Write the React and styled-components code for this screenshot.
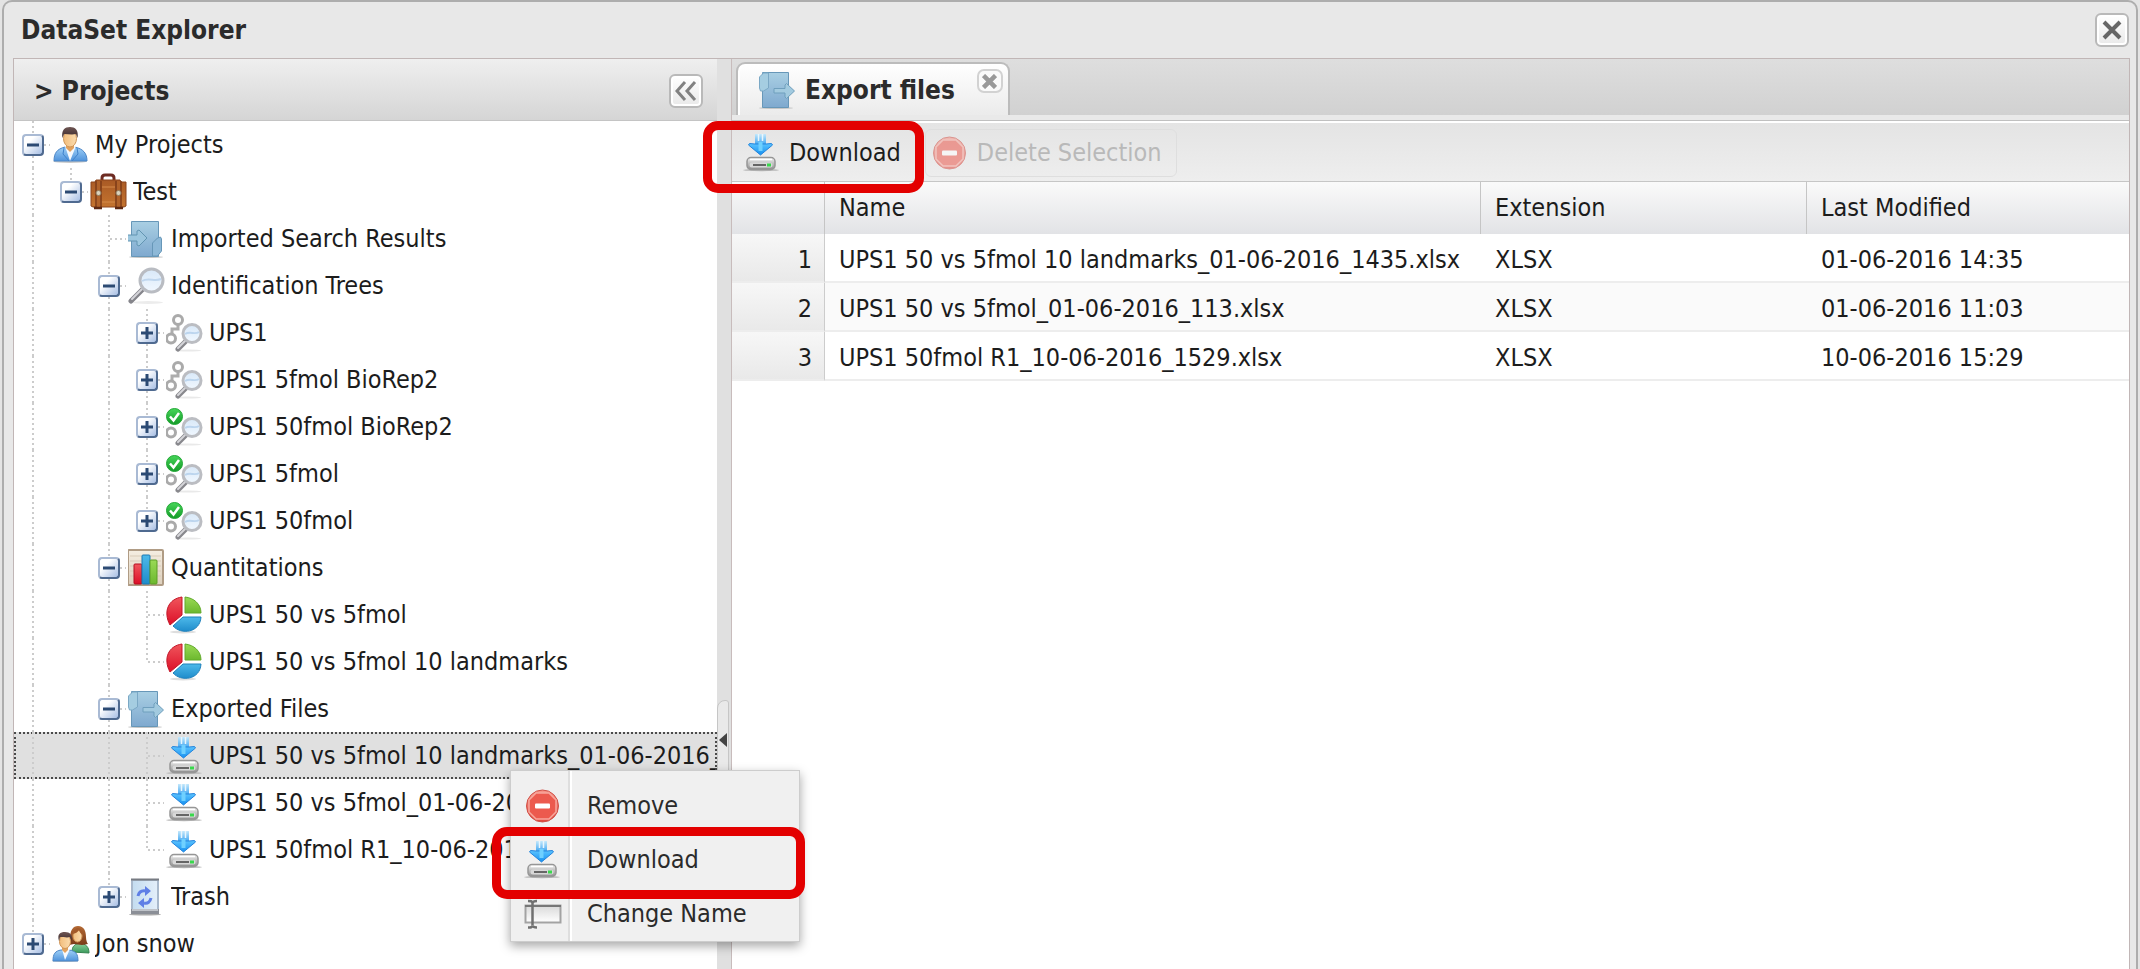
import React from "react";
import styled, { createGlobalStyle, css } from "styled-components";

const GlobalStyle = createGlobalStyle`
  * {
    box-sizing: border-box;
  }

  body {
    margin: 0;
    background: #e4e4e4;
    color: #1c1c1c;
    font-family: "DejaVu Sans Condensed", Roboto, "Liberation Sans", sans-serif;
    font-size: 25px;
    line-height: 30px;
  }

  button {
    margin: 0;
    padding: 0;
    border: 0;
    background: none;
    color: inherit;
    font: inherit;
    text-align: left;
    cursor: pointer;
  }

  svg {
    display: block;
    flex: none;
  }
`;

const Window = styled.div`
  display: flex;
  flex-flow: column;
  height: 100vh;
  margin: 0 2px;
  padding: 0 6px 0 9px;
  overflow: hidden;
  border: 2px solid #adadad;
  border-bottom: 0;
  border-radius: 10px 10px 0 0;
  background: #e8e8e8;
`;

const TitleBar = styled.header`
  display: flex;
  flex: none;
  align-items: center;
  justify-content: space-between;
  height: 56px;
  padding: 0 1px 0 8px;
`;

const Title = styled.h1`
  margin: 0;
  color: #2b2b2b;
  font-size: 26px;
  font-weight: bold;
`;

const ToolButton = styled.button`
  display: flex;
  align-items: center;
  justify-content: center;
  width: 34px;
  height: 34px;
  border: 2px solid #b9b9b9;
  border-radius: 6px;
  background: linear-gradient(#ffffff, #e9e9e9);
  box-shadow: inset 0 0 0 2px #ffffff;
`;

const Body = styled.div`
  display: flex;
  flex: 1;
  min-height: 0;
  border: solid #c1b6b6;
  border-width: 1px 1px 0;
  background: #ffffff;
`;

const Sidebar = styled.aside`
  flex: none;
  width: 703px;
`;

const PanelHeader = styled.div`
  display: flex;
  align-items: center;
  justify-content: space-between;
  height: 62px;
  padding: 2px 14px 0 20px;
  border-bottom: 1px solid #c4c4c4;
  background: linear-gradient(#efefef, #d5d5d5);
`;

const PanelTitle = styled(Title).attrs({ as: "h2" })``;

const Tree = styled.ul`
  margin: 0;
  padding: 0;
  list-style: none;
`;

const TreeItem = styled.li`
  position: relative;
`;

const TreeRow = styled.div`
  display: flex;
  align-items: center;
  height: 47px;

  ${({ $selected }) =>
    $selected &&
    css`
      background: #e0e0e0;
      outline: 2px dotted #4a4a4a;
      outline-offset: -2px;
    `}
`;

const verticalDots =
  "repeating-linear-gradient(#cccccc 0 2px, transparent 2px 5px)";
const horizontalDots =
  "repeating-linear-gradient(90deg, #cccccc 0 2px, transparent 2px 5px)";

const Indent = styled.span`
  position: relative;
  display: flex;
  flex: none;
  align-items: center;
  justify-content: center;
  width: 38px;
  height: 47px;

  &::before {
    content: "";
    position: absolute;
    top: 0;
    left: 18px;
    width: 2px;
    height: ${({ $line }) => ({ full: "100%", end: "50%" }[$line] || 0)};
    background: ${verticalDots};
  }

  &::after {
    content: "";
    position: absolute;
    top: 23px;
    left: 20px;
    width: ${({ $elbow }) => ($elbow ? "16px" : 0)};
    height: 2px;
    background: ${horizontalDots};
  }
`;

const Expander = styled.button`
  position: relative;
  z-index: 1;
  display: flex;
  align-items: center;
  justify-content: center;
  width: 22px;
  height: 22px;
  border: 2px solid #4f6a90;
  border-top-color: #a9bad4;
  border-left-color: #a9bad4;
  border-radius: 4px;
  background: linear-gradient(135deg, #ffffff 30%, #a8bfe4);
`;

const TreeLabel = styled.span`
  flex: 1;
  margin-left: 5px;
  overflow: hidden;
  white-space: nowrap;
`;

const Splitter = styled.div`
  display: flex;
  flex: none;
  flex-flow: column;
  width: 14px;
  padding-top: 641px;
  background: #e0e0e0;
`;

const SplitterHandle = styled.button`
  display: flex;
  align-items: center;
  justify-content: center;
  width: 12px;
  height: 80px;
  border: 1px solid #c6c6c6;
  border-radius: 8px 3px 3px 8px;
  background: #e9e9e9;
`;

const Main = styled.main`
  flex: 1;
  min-width: 0;
  border-left: 1px solid #c8bcbc;
`;

const TabBar = styled.div`
  display: flex;
  align-items: flex-end;
  height: 56px;
  padding-left: 4px;
  background: linear-gradient(#dedede, #d1d1d1);
`;

const TabStrip = styled.div`
  height: 8px;
  border-bottom: 2px solid #ffffff;
  background: linear-gradient(#e9e9e9 5px, #c0c0c0 5px);
`;

const Tab = styled.div`
  display: flex;
  align-items: center;
  height: 53px;
  padding: 0 5px 0 21px;
  border: 2px solid #bcbcbc;
  border-bottom: 0;
  border-radius: 9px 9px 0 0;
  background: linear-gradient(#ffffff, #ebebeb);
  box-shadow: inset 2px 1px 0 #ffffff;
`;

const TabLabel = styled.button`
  display: flex;
  gap: 8px;
  align-items: center;
  color: #2b2b2b;
  font-size: 26px;
  font-weight: bold;
`;

const TabClose = styled.button`
  display: flex;
  align-self: flex-start;
  align-items: center;
  justify-content: center;
  width: 26px;
  height: 24px;
  margin: 5px 0 0 22px;
  border: 2px solid #d2d2d2;
  border-radius: 7px;
  background: #fafafa;
`;

const Toolbar = styled.div`
  display: flex;
  gap: 9px;
  align-items: center;
  height: 59px;
  padding: 2px 0 0 5px;
  border-bottom: 1px solid #c6c6c6;
  background: linear-gradient(#e4e4e4, #eeeeee);
`;

const ToolbarButton = styled.button`
  position: relative;
  display: flex;
  gap: 8px;
  align-items: center;
  height: 48px;
  padding: 0 14px 0 5px;
  border: 1px solid transparent;
  border-radius: 6px;

  &:disabled {
    border-color: #dedede;
    color: #b9b9b9;
    cursor: default;

    svg {
      opacity: 0.55;
    }
  }
`;

const Highlight = styled.span`
  position: absolute;
  z-index: 3;
  border: 9px solid #e30000;
  border-radius: 15px;
  pointer-events: none;
`;

const ToolbarHighlight = styled(Highlight)`
  top: -9px;
  right: -9px;
  left: -35px;
  height: 72px;
`;

const Grid = styled.table`
  width: 100%;
  border-collapse: separate;
  border-spacing: 0;
  table-layout: fixed;
`;

const Column = styled.col`
  width: ${({ $width }) => $width};
`;

const HeadCell = styled.th`
  height: 52px;
  padding: 0 14px;
  border-right: 1px solid #c5c5c5;
  background: linear-gradient(#fafafa, #e2e3e6);
  font-weight: normal;
  text-align: left;

  &:last-child {
    border-right: 0;
  }
`;

const Cell = styled.td`
  height: 49px;
  padding: 4px 14px 0;
  border-bottom: 2px solid #ededed;
  overflow: hidden;
  white-space: nowrap;

  tr:nth-child(even) > & {
    background: #fafafa;
  }
`;

const NumberCell = styled.th`
  height: 49px;
  padding: 4px 12px 0;
  border-right: 1px solid #cccccc;
  border-bottom: 2px solid #ededed;
  background: linear-gradient(#f7f7f7, #e9e9e9);
  font-weight: normal;
  text-align: right;
`;

const ContextMenu = styled.div`
  position: absolute;
  z-index: 2;
  top: 38px;
  left: 496px;
  width: 290px;
  padding-top: 8px;
  border: 1px solid #cdcdcd;
  background: linear-gradient(
    90deg,
    #f0f0f0 57px,
    #dedede 57px 59px,
    #ffffff 59px 61px,
    #f0f0f0 61px
  );
  box-shadow: 0 4px 10px rgba(0, 0, 0, 0.35);
`;

const MenuItem = styled.button`
  position: relative;
  display: flex;
  gap: 25px;
  align-items: center;
  width: 100%;
  height: 54px;
  padding-left: 13px;
  color: #2b2b2b;
`;

const MenuHighlight = styled(Highlight)`
  top: -6px;
  right: -6px;
  left: -19px;
  height: 72px;
`;

const Defs = styled.svg`
  position: absolute;
  width: 0;
  height: 0;
`;

const Gradient = ({ id, from, to, flat }) => (
  <linearGradient id={id} x1="0" y1="0" x2={flat ? 1 : 0} y2={flat ? 0 : 1}>
    <stop offset="0" stopColor={from} />
    <stop offset="1" stopColor={to} />
  </linearGradient>
);

const IconDefs = () => (
  <Defs aria-hidden="true">
    <defs>
      <Gradient id="shirt" from="#9fd0f7" to="#4f93dc" />
      <Gradient id="shirt-green" from="#8ed09a" to="#3b9a5c" />
      <Gradient id="skin" from="#f2bd7c" to="#fbdcae" flat />
      <Gradient id="hair" from="#6e5552" to="#3c2a2c" />
      <Gradient id="ginger" from="#b46a34" to="#7a3a18" />
      <Gradient id="leather" from="#a95a25" to="#c4742f" />
      <Gradient id="folder" from="#a9cfe3" to="#7fa9cf" />
      <Gradient id="lens" from="#d8e8f8" to="#f1f8ff" />
      <Gradient id="arrow" from="#5cc4ff" to="#1590f0" />
      <Gradient id="shaft" from="#c4e8fb" to="#2f9df0" />
      <Gradient id="drive" from="#f2f2f2" to="#8d8d8d" />
      <Gradient id="stop" from="#f8978a" to="#e2453a" />
      <Gradient id="red" from="#f0565c" to="#dc0f28" />
      <Gradient id="blue" from="#4db9ea" to="#1f8ccb" />
      <Gradient id="green" from="#9ada55" to="#6cb82e" />
      <Gradient id="check" from="#47d65a" to="#149a27" />
      <Gradient id="paper" from="#f5eee2" to="#ddd0bd" />
      <Gradient id="bin" from="#c3dcf0" to="#e4effa" flat />
      <Gradient id="field" from="#d9d9d9" to="#ffffff" />
    </defs>
  </Defs>
);

const Icon = ({ children }) => (
  <svg width="38" height="38" viewBox="0 0 38 38" fill="none" aria-hidden="true">
    {children}
  </svg>
);

const UserIcon = () => (
  <Icon>
    <ellipse cx="18" cy="35.5" rx="17" ry="1.5" fill="#c9c9c9" />
    <path d="M2 35c0-8 3-12 11-14h10c8 2 12 6 12 14z" fill="url(#shirt)" stroke="#4c86c6" />
    <path d="M13 20l5 15 6-15z" fill="#f6f9fd" />
    <path d="M12 22l-1 6 6 7M25 22l1 6-6 7" stroke="#3f82cb" />
    <path d="M14 17h8v5l-4 4-4-4z" fill="#e2a25e" />
    <ellipse cx="18" cy="12.5" rx="6.5" ry="8.5" fill="url(#skin)" stroke="#cf9557" />
    <path d="M10.5 12C9 4 13 1 18 1s9 3 7.500 11L24 8c-4 1-8 0-12 0z" fill="url(#hair)" />
  </Icon>
);

const UsersIcon = () => (
  <Icon>
    <path d="M20 27c0-6 3-8 8-9 6 1 9 4 9 10z" fill="url(#shirt-green)" stroke="#358450" />
    <path d="M18 14C18 5 21 1 26 1c6 0 8 5 8 11 0 3 1 6 2 7l-6 1-8-1-5 1z" fill="url(#ginger)" />
    <ellipse cx="25.5" cy="11" rx="4.5" ry="6" fill="url(#skin)" stroke="#cf9557" />
    <path d="M21 9c3-1 5-2 6-4 1 3 2 4 4 5-1-6-3-7-6-7-3 1-4 3-4 6z" fill="#a35a2a" />
    <ellipse cx="13" cy="36" rx="13" ry="1" fill="#c9c9c9" />
    <path d="M1 36c0-7 2-10 8-11h8c7 1 9 4 9 11z" fill="url(#shirt)" stroke="#4c86c6" />
    <path d="M10 24l3 11 5-11z" fill="#f6f9fd" />
    <path d="M10 21h6v4l-3 3-3-3z" fill="#e2a25e" />
    <ellipse cx="13" cy="16.5" rx="5.5" ry="7" fill="url(#skin)" stroke="#cf9557" />
    <path d="M7 16C5 9 8 7 13 7s8 3 6.500 9L18 12c-3 1-6 0-10 0z" fill="url(#hair)" />
  </Icon>
);

const SuitcaseIcon = () => (
  <Icon>
    <path d="M12 9V5c0-2 1-3 3-3h6c2 0 3 1 3 3v4" stroke="#6d2b22" strokeWidth="3" />
    <path d="M1 9h4l1-2h24l1 2h5v24l-2 1H3l-2-1z" fill="url(#leather)" stroke="#8b451c" />
    <path d="M6 8v27M11 8v27M26 8v27M31 8v27" stroke="#7d3b18" strokeWidth="1.5" />
    <path d="M7 8h3v27H7zM27 8h3v27h-3z" fill="#b0622a" />
    <path d="M12 14h13M12 29h13" stroke="#d58b4a" />
    <path d="M4 35h8M25 35h8" stroke="#5e2812" strokeWidth="2.5" />
    <circle cx="8.5" cy="20" r="2.5" fill="#d9d2bd" stroke="#8e7a5c" />
    <circle cx="28.5" cy="20" r="2.5" fill="#d9d2bd" stroke="#8e7a5c" />
  </Icon>
);

const ImportIcon = () => (
  <Icon>
    <ellipse cx="18" cy="37" rx="17" ry="1" fill="#c5c5c5" />
    <path d="M3.5 1.5h27v35h-27z" fill="url(#folder)" stroke="#6797b8" />
    <path d="M24.5 36V23l5-5 3-1 1 2v12l-4 5z" fill="#8db8d7" stroke="#6797b8" />
    <path d="M-1 15h10v-4l2-1 8 8-8 8-2-1v-4H-1z" fill="#9cc6de" stroke="#6395b2" />
  </Icon>
);

const ExportIcon = () => (
  <Icon>
    <ellipse cx="17" cy="37" rx="17" ry="1" fill="#c5c5c5" />
    <path d="M3.5 1.5h26v35h-26z" fill="url(#folder)" stroke="#6797b8" />
    <path d="M.5 17V6l4-4h5v15l-5 3h-3z" fill="#a5cde1" stroke="#7ba8c5" />
    <path d="M15 17.500h11V14l1.500-1.500 8 7.500-8 7.500L26 26v-4H15z" fill="#a2cadf" stroke="#6f9fbd" />
  </Icon>
);

const SearchIcon = () => (
  <Icon>
    <ellipse cx="20" cy="35.5" rx="15" ry="1.5" fill="#ececec" />
    <path d="M14 23L3 34" stroke="#85858b" strokeWidth="5" strokeLinecap="round" />
    <path d="M14 22L4 32" stroke="#d5d5da" strokeWidth="2" strokeLinecap="round" />
    <circle cx="23.5" cy="13.5" r="11.5" fill="url(#lens)" stroke="#b9bcc2" strokeWidth="3" />
    <path d="M14 14c6-4 13 1 19-2" stroke="#bfd6ee" strokeWidth="2" />
  </Icon>
);

const lens = (
  <>
    <ellipse cx="22" cy="36.5" rx="13" ry="1" fill="#e9e9e9" />
    <path d="M20 27l-8 8" stroke="#88888d" strokeWidth="5" strokeLinecap="round" />
    <path d="M20 26l-8 8" stroke="#d6d6da" strokeWidth="2" strokeLinecap="round" />
    <circle cx="26" cy="19.5" r="9" fill="url(#lens)" stroke="#bbbdc2" strokeWidth="3" />
    <path d="M19 20c5-3 10 1 14-2" stroke="#bcd5ee" strokeWidth="2" />
    <circle cx="5" cy="24.5" r="4.5" fill="#ffffff" stroke="#aaaaaa" strokeWidth="3" />
  </>
);

const DatasetIcon = () => (
  <Icon>
    <path d="M12 11v4H6v5" stroke="#adadad" strokeWidth="3" />
    <circle cx="12" cy="6" r="4.5" fill="#ffffff" stroke="#aaaaaa" strokeWidth="3" />
    {lens}
  </Icon>
);

const ValidatedIcon = () => (
  <Icon>
    {lens}
    <circle cx="8.5" cy="8.5" r="8" fill="url(#check)" stroke="#23a837" />
    <path d="M4 8.500l3.500 4L13 5" stroke="#ffffff" strokeWidth="2.5" />
  </Icon>
);

const ChartIcon = () => (
  <Icon>
    <rect x="0" y="1" width="35" height="35" rx="1" fill="url(#paper)" stroke="#b09c85" strokeWidth="2" />
    <path d="M2 7h31M2 12h31M2 17h31M2 22h31M2 27h31" stroke="#d9cbb8" />
    <rect x="6" y="15" width="8" height="20" rx="1" fill="url(#red)" stroke="#b50f20" />
    <rect x="14" y="6" width="8" height="29" rx="1" fill="url(#blue)" stroke="#1b79b4" />
    <rect x="22" y="11" width="7" height="24" rx="1" fill="url(#green)" stroke="#5c9d26" />
  </Icon>
);

const PieIcon = () => (
  <Icon>
    <ellipse cx="17" cy="36" rx="13" ry="1.5" fill="#dedede" />
    <path d="M16 1v18L4 29C-3 16 2 3 16 1z" fill="url(#red)" stroke="#c31527" />
    <path d="M19 1c9 1 16 7 16 16H19z" fill="url(#green)" stroke="#62aa2b" />
    <path d="M17 21h18c-1 16-20 18-28 9z" fill="url(#blue)" stroke="#1f81bc" />
  </Icon>
);

const DownloadIcon = () => (
  <Icon>
    <ellipse cx="18" cy="36" rx="18" ry="1.2" fill="#b7b7b7" />
    <path d="M12 0h11v12H12z" fill="url(#shaft)" />
    <path d="M15.500 0v7M19.500 0v7" stroke="#e9f6fd" strokeWidth="1.5" />
    <path d="M17.500 21L5.500 11l1-1.500L12 10h11l5.500-.5 1 1.500z" fill="url(#arrow)" stroke="#2584dc" />
    <path d="M17.500 8v9" stroke="#6fd0ff" strokeWidth="4" />
    <rect x="4" y="23.5" width="28" height="12" rx="4" fill="url(#drive)" stroke="#969696" strokeWidth="1.5" />
    <path d="M7 25.500h22" stroke="#ffffff" strokeWidth="1.5" />
    <path d="M9 31h18" stroke="#d8d8d8" strokeWidth="5" strokeLinecap="round" />
    <path d="M10 31h13" stroke="#666666" strokeWidth="2" />
    <path d="M24 31h4" stroke="#39d84c" strokeWidth="3" />
  </Icon>
);

const RemoveIcon = () => (
  <Icon>
    <circle cx="18.5" cy="19" r="16" fill="url(#stop)" stroke="#cf5148" />
    <path d="M12 6h13l7 7v12l-7 7H12l-7-7V13z" fill="#ec5a4e" stroke="#f7a79d" strokeWidth="1.5" />
    <rect x="11" y="16.5" width="15" height="5" rx="1" fill="#ffffff" />
  </Icon>
);

const RenameIcon = () => (
  <Icon>
    <rect x="1.5" y="10.5" width="35" height="17" fill="url(#field)" stroke="#a3a3a3" strokeWidth="2" />
    <path d="M1 11h36" stroke="#777777" strokeWidth="2" />
    <path d="M4 6c3 0 4 0 4.500 2C9 6 11 6 13 6M8.500 8v22M4 32.500c3 0 4 0 4.500-2 .500 2 2 2 4.500 2" stroke="#707070" strokeWidth="2.5" />
  </Icon>
);

const TrashIcon = () => (
  <Icon>
    <ellipse cx="17" cy="36.5" rx="16" ry="1" fill="#aaaaaa" />
    <path d="M4 2h26v30H4z" fill="url(#bin)" stroke="#a9b9cc" strokeWidth="2" />
    <path d="M3 31h28v5H3z" fill="#8b8f97" />
    <path d="M4 32h26" stroke="#d0d4da" strokeWidth="1.5" />
    <path d="M3 1.500h28" stroke="#777b82" strokeWidth="2" />
    <path d="M10 18c1-4 3-6 8-5M23 20c-1 4-3 6-7 5" stroke="#5f7fe6" strokeWidth="3" />
    <path d="M17 8l6 5-6 5zM16 20l-6 5 6 5z" fill="#5f7fe6" />
  </Icon>
);

const CollapseIcon = () => (
  <svg width="22" height="22" viewBox="0 0 22 22" fill="none" aria-hidden="true">
    <path d="M10 2l-8 9 8 9M20 2l-8 9 8 9" stroke="#828282" strokeWidth="3" />
  </svg>
);

const CrossIcon = ({ size, color, weight }) => (
  <svg width={size} height={size} viewBox="0 0 20 20" fill="none" aria-hidden="true">
    <path d="M2 2l16 16M18 2L2 18" stroke={color} strokeWidth={weight} />
  </svg>
);

const ToggleIcon = ({ open }) => (
  <svg width="14" height="14" viewBox="0 0 14 14" fill="none" aria-hidden="true">
    <path d={open ? "M1 7h12" : "M1 7h12M7 1v12"} stroke="#2c4a73" strokeWidth="3" />
  </svg>
);

const tree = [
  {
    name: "My Projects",
    icon: UserIcon,
    children: [
      {
        name: "Test",
        icon: SuitcaseIcon,
        children: [
          { name: "Imported Search Results", icon: ImportIcon },
          {
            name: "Identification Trees",
            icon: SearchIcon,
            children: [
              { name: "UPS1", icon: DatasetIcon, closed: true },
              { name: "UPS1 5fmol BioRep2", icon: DatasetIcon, closed: true },
              { name: "UPS1 50fmol BioRep2", icon: ValidatedIcon, closed: true },
              { name: "UPS1 5fmol", icon: ValidatedIcon, closed: true },
              { name: "UPS1 50fmol", icon: ValidatedIcon, closed: true }
            ]
          },
          {
            name: "Quantitations",
            icon: ChartIcon,
            children: [
              { name: "UPS1 50 vs 5fmol", icon: PieIcon },
              { name: "UPS1 50 vs 5fmol 10 landmarks", icon: PieIcon }
            ]
          },
          {
            name: "Exported Files",
            icon: ExportIcon,
            children: [
              {
                name: "UPS1 50 vs 5fmol 10 landmarks_01-06-2016_1435.xlsx",
                icon: DownloadIcon,
                selected: true
              },
              { name: "UPS1 50 vs 5fmol_01-06-2016_113.xlsx", icon: DownloadIcon },
              { name: "UPS1 50fmol R1_10-06-2016_1529.xlsx", icon: DownloadIcon }
            ]
          },
          { name: "Trash", icon: TrashIcon, closed: true }
        ]
      }
    ]
  },
  { name: "Jon snow", icon: UsersIcon, closed: true }
];

const files = [
  {
    name: "UPS1 50 vs 5fmol 10 landmarks_01-06-2016_1435.xlsx",
    extension: "XLSX",
    modified: "01-06-2016 14:35"
  },
  {
    name: "UPS1 50 vs 5fmol_01-06-2016_113.xlsx",
    extension: "XLSX",
    modified: "01-06-2016 11:03"
  },
  {
    name: "UPS1 50fmol R1_10-06-2016_1529.xlsx",
    extension: "XLSX",
    modified: "10-06-2016 15:29"
  }
];

const FileMenu = () => (
  <ContextMenu role="menu">
    <MenuItem role="menuitem">
      <RemoveIcon />
      Remove
    </MenuItem>
    <MenuItem role="menuitem">
      <DownloadIcon />
      Download
      <MenuHighlight />
    </MenuItem>
    <MenuItem role="menuitem">
      <RenameIcon />
      Change Name
    </MenuItem>
  </ContextMenu>
);

// lines holds one flag per ancestor: true when its dotted line carries on
const Node = ({ node, last, lines }) => {
  const { name, icon: NodeIcon, children, closed, selected } = node;
  const hasToggle = Boolean(children || closed);

  return (
    <TreeItem role="treeitem" aria-selected={Boolean(selected)}>
      <TreeRow $selected={selected}>
        {lines.map((line, i) => (
          <Indent key={i} $line={line ? "full" : "none"} />
        ))}
        <Indent $line={last ? "end" : "full"} $elbow>
          {hasToggle && (
            <Expander aria-label={`${closed ? "Expand" : "Collapse"} ${name}`}>
              <ToggleIcon open={!closed} />
            </Expander>
          )}
        </Indent>
        <NodeIcon />
        <TreeLabel>{name}</TreeLabel>
      </TreeRow>
      {selected && <FileMenu />}
      {children && (
        <Tree role="group">
          <Nodes nodes={children} lines={[...lines, !last]} />
        </Tree>
      )}
    </TreeItem>
  );
};

const Nodes = ({ nodes, lines }) =>
  nodes.map((node, i) => (
    <Node
      key={node.name}
      node={node}
      last={i === nodes.length - 1}
      lines={lines}
    />
  ));

const App = () => (
  <>
    <GlobalStyle />
    <IconDefs />
    <Window>
      <TitleBar>
        <Title>DataSet Explorer</Title>
        <ToolButton aria-label="Close window">
          <CrossIcon size={20} color="#666666" weight={4} />
        </ToolButton>
      </TitleBar>
      <Body>
        <Sidebar>
          <PanelHeader>
            <PanelTitle>&gt; Projects</PanelTitle>
            <ToolButton aria-label="Collapse projects">
              <CollapseIcon />
            </ToolButton>
          </PanelHeader>
          <Tree role="tree">
            <Nodes nodes={tree} lines={[]} />
          </Tree>
        </Sidebar>
        <Splitter>
          <SplitterHandle aria-label="Collapse panel">
            <svg width="8" height="14" viewBox="0 0 8 14" aria-hidden="true">
              <path d="M8 0v14L0 7z" fill="#444444" />
            </svg>
          </SplitterHandle>
        </Splitter>
        <Main>
          <TabBar>
            <Tab>
              <TabLabel>
                <ExportIcon />
                Export files
              </TabLabel>
              <TabClose aria-label="Close tab">
                <CrossIcon size={15} color="#999999" weight={6} />
              </TabClose>
            </Tab>
          </TabBar>
          <TabStrip />
          <Toolbar>
            <ToolbarButton>
              <DownloadIcon />
              Download
              <ToolbarHighlight />
            </ToolbarButton>
            <ToolbarButton disabled>
              <RemoveIcon />
              Delete Selection
            </ToolbarButton>
          </Toolbar>
          <Grid>
            <colgroup>
              <Column $width="93px" />
              <Column $width="656px" />
              <Column $width="326px" />
              <Column />
            </colgroup>
            <thead>
              <tr>
                <HeadCell as="td" />
                <HeadCell scope="col">Name</HeadCell>
                <HeadCell scope="col">Extension</HeadCell>
                <HeadCell scope="col">Last Modified</HeadCell>
              </tr>
            </thead>
            <tbody>
              {files.map(({ name, extension, modified }, i) => (
                <tr key={name}>
                  <NumberCell scope="row">{i + 1}</NumberCell>
                  <Cell>{name}</Cell>
                  <Cell>{extension}</Cell>
                  <Cell>{modified}</Cell>
                </tr>
              ))}
            </tbody>
          </Grid>
        </Main>
      </Body>
    </Window>
  </>
);

export default App;
